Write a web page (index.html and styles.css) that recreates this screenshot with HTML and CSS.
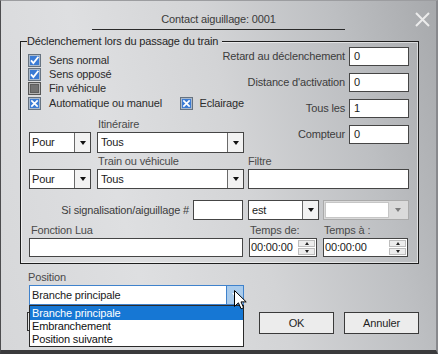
FILE: index.html
```html
<!DOCTYPE html>
<html lang="fr">
<head>
<meta charset="utf-8">
<title>Contact aiguillage</title>
<link rel="stylesheet" href="styles.css">
</head>
<body>
<div class="window">
  <div class="titlebar">
    <div class="title">Contact aiguillage: 0001</div>
    <svg class="close" width="15" height="15" viewBox="0 0 15 15"><path d="M1 1 L14 14 M14 1 L1 14" stroke="#ececec" stroke-width="2" fill="none"/></svg>
  </div>

  <div class="group">
    <div class="group-head"><span class="gh-tick"></span><span class="gh-text">Déclenchement lors du passage du train</span><span class="gh-line"></span></div>
    <div class="group-body">
      <div class="a-left">
        <div class="chk">
          <svg class="cb" width="13" height="13" viewBox="0 0 13 13"><rect x="0.5" y="0.5" width="12" height="12" fill="#a9b9cc" stroke="#66727f"/><rect x="2" y="2" width="9" height="9" fill="#3b7bd4"/><path d="M3 6.3 L5.4 9 L10.4 2.8" fill="none" stroke="#fff" stroke-width="1.8"/></svg>
          <span>Sens normal</span>
        </div>
        <div class="chk">
          <svg class="cb" width="13" height="13" viewBox="0 0 13 13"><rect x="0.5" y="0.5" width="12" height="12" fill="#a9b9cc" stroke="#66727f"/><rect x="2" y="2" width="9" height="9" fill="#3b7bd4"/><path d="M3 6.3 L5.4 9 L10.4 2.8" fill="none" stroke="#fff" stroke-width="1.8"/></svg>
          <span>Sens opposé</span>
        </div>
        <div class="chk">
          <svg class="cb" width="13" height="13" viewBox="0 0 13 13"><rect x="0.5" y="0.5" width="12" height="12" fill="#b4b4b4" stroke="#555"/><rect x="2" y="2" width="9" height="9" fill="#5e5e5e"/><rect x="3" y="3" width="7" height="7" fill="#727272"/></svg>
          <span>Fin véhicule</span>
        </div>
        <div class="chk chk-last">
          <div class="chk chk-wide">
            <svg class="cb" width="13" height="13" viewBox="0 0 13 13"><rect x="0.5" y="0.5" width="12" height="12" fill="#a9b9cc" stroke="#66727f"/><rect x="2" y="2" width="9" height="9" fill="#3b7bd4"/><path d="M3.3 3.3 L9.7 9.7 M9.7 3.3 L3.3 9.7" fill="none" stroke="#fff" stroke-width="1.7"/></svg>
            <span>Automatique ou manuel</span>
          </div>
          <div class="chk">
            <svg class="cb cb-tight" width="13" height="13" viewBox="0 0 13 13"><rect x="0.5" y="0.5" width="12" height="12" fill="#a9b9cc" stroke="#66727f"/><rect x="2" y="2" width="9" height="9" fill="#3b7bd4"/><path d="M3.3 3.3 L9.7 9.7 M9.7 3.3 L3.3 9.7" fill="none" stroke="#fff" stroke-width="1.7"/></svg>
            <span>Eclairage</span>
          </div>
        </div>

        <div class="pair pair-1">
          <div class="combo c-pour"><span class="ctext">Pour</span><span class="cbtn"><i class="tri"></i></span></div>
          <div class="pcol">
            <div class="lbl">Itinéraire</div>
            <div class="combo c-tous"><span class="ctext">Tous</span><span class="cbtn"><i class="tri"></i></span></div>
          </div>
        </div>
      </div>

      <div class="a-right">
        <div class="frow"><span class="rlbl">Retard au déclenchement</span><div class="field f-num">0</div></div>
        <div class="frow"><span class="rlbl">Distance d'activation</span><div class="field f-num">0</div></div>
        <div class="frow"><span class="rlbl">Tous les</span><div class="field f-num">1</div></div>
        <div class="frow"><span class="rlbl">Compteur</span><div class="field f-num">0</div></div>
      </div>

      <div class="b-left">
        <div class="pair pair-2">
          <div class="combo c-pour c-short"><span class="ctext">Pour</span><span class="cbtn"><i class="tri"></i></span></div>
          <div class="pcol">
            <div class="lbl">Train ou véhicule</div>
            <div class="combo c-tous c-short"><span class="ctext">Tous</span><span class="cbtn"><i class="tri"></i></span></div>
          </div>
        </div>
      </div>
      <div class="b-right">
        <div class="lbl lbl-flush">Filtre</div>
        <div class="field f-filtre"></div>
      </div>

      <div class="c-left">
        <span class="rlbl">Si signalisation/aiguillage #</span>
        <div class="field f-sig"></div>
      </div>
      <div class="c-right">
        <div class="combo c-est"><span class="ctext">est</span><span class="cbtn"><i class="tri"></i></span></div>
        <div class="combo c-dis"><span class="ctext"></span><span class="cbtn"><i class="tri"></i></span></div>
      </div>

      <div class="d-left">
        <div class="lbl lbl-lua">Fonction Lua</div>
        <div class="field f-lua"></div>
      </div>
      <div class="d-right">
        <div class="tcol t-de">
          <div class="lbl">Temps de:</div>
          <div class="time"><span class="ttext">00:00:00</span><span class="spin"><span class="sb"><i class="up"></i></span><span class="sb"><i class="dn"></i></span></span></div>
        </div>
        <div class="tcol t-a">
          <div class="lbl">Temps à :</div>
          <div class="time"><span class="ttext">00:00:00</span><span class="spin"><span class="sb"><i class="up"></i></span><span class="sb"><i class="dn"></i></span></span></div>
        </div>
      </div>
    </div>
  </div>

  <div class="bottom">
    <div class="pos-col">
      <div class="lbl">Position</div>
      <div class="combo-wrap">
        <div class="combo c-pos"><span class="ctext">Branche principale</span><span class="cbtn"><i class="tri"></i></span></div>
        <div class="dropdown">
          <div class="opt sel">Branche principale</div>
          <div class="opt">Embranchement</div>
          <div class="opt">Position suivante</div>
        </div>
      </div>
      <div class="ghost-btn"></div>
    </div>
    <div class="buttons">
      <div class="btn">OK</div>
      <div class="btn">Annuler</div>
    </div>
  </div>

  <svg class="cursor" width="13" height="20" viewBox="0 0 13 20"><path d="M0.5 0.5 L0.5 16.5 L4.4 12.8 L7.1 18.8 L9.6 17.7 L7 11.9 L12.2 11.9 Z" fill="#fff" stroke="#000" stroke-width="1" stroke-linejoin="miter"/></svg>
</div>
</body>
</html>
```

FILE: styles.css
```css
* { box-sizing: border-box; }

body {
  margin: 0;
  background: #c9cacc;
}

.window {
  position: relative;
  width: 438px;
  height: 354px;
  overflow: hidden;
  border-left: 1px solid #4d4d4f;
  border-top: 1px solid #9c9da0;
  border-right: 2px solid #88898d;
  border-bottom: 4px solid #3a3a3c;
  background: linear-gradient(75deg, #d6d7d9 0%, #dedfe1 30%, #d3d4d6 55%, #bdbfc2 80%, #a7a9ac 100%);
  font-family: "Liberation Sans", Arial, sans-serif;
  font-size: 11px;
  line-height: 13px;
  letter-spacing: -0.15px;
  color: #2c2c2c;
}

/* title bar */
.titlebar {
  display: flex;
  height: 34px;
}
.title {
  margin-left: 91px;
  margin-top: 12px;
  width: 253px;
  height: 17px;
  border-bottom: 1px solid #2a2a2a;
  text-align: center;
  color: #3a3a3a;
}
.close {
  margin-left: auto;
  margin-top: 11px;
  margin-right: 6px;
}

/* group box */
.group {
  margin-left: 19px;
  width: 399px;
}
.group-head {
  display: flex;
  height: 12px;
}
.gh-tick {
  width: 7px;
  margin-top: 6px;
  border-left: 1px solid #1e1e1e;
  border-top: 1px solid #1e1e1e;
}
.gh-text {
  white-space: nowrap;
  padding-right: 4px;
  color: #262626;
}
.gh-line {
  flex: 1;
  margin-top: 6px;
  border-top: 1px solid #1e1e1e;
  border-right: 1px solid #1e1e1e;
  box-shadow: inset -1px 1px 0 rgba(255,255,255,0.55);
}
.group-body {
  display: grid;
  grid-template-columns: 215px 161px;
  column-gap: 4px;
  padding: 0 9px 6px 8px;
  border: 1px solid #1e1e1e;
  border-top: none;
  box-shadow: inset 1px -1px 0 rgba(255,255,255,0.55), inset -1px 0 0 rgba(255,255,255,0.55);
}

/* checkboxes */
.a-left { padding-top: 7px; }
.chk {
  display: flex;
  align-items: flex-start;
  height: 14px;
  white-space: nowrap;
}
.chk-last { margin-top: 1px; }
.chk-wide { width: 158px; margin-left: -1px; }
.chk-wide .cb { margin-left: 0; }
.cb {
  flex-shrink: 0;
  margin-left: -1px;
  margin-right: 8px;
}
.cb-tight { margin-left: 0; margin-right: 6px; }

/* labels */
.lbl {
  color: #4a4a4a;
  padding-left: 1px;
  margin-bottom: 1px;
  white-space: nowrap;
}
.lbl-flush { padding-left: 0; }
.lbl-lua { padding-left: 2px; }
.rlbl {
  color: #3c3c3c;
  white-space: nowrap;
  flex-shrink: 0;
}

/* combos */
.pair {
  display: flex;
  align-items: flex-end;
  gap: 6px;
}
.pair-1 { margin-top: 7px; }
.pair-2 { margin-top: 2px; }
.combo {
  display: flex;
  height: 21px;
  background: #fff;
  border: 1px solid #454545;
}
.c-short { height: 20px; }
.c-pour { width: 62px; }
.c-tous { width: 147px; }
.ctext {
  flex: 1;
  display: flex;
  align-items: center;
  padding-left: 2px;
  white-space: nowrap;
  color: #1a1a1a;
}
.c-tous .ctext { padding-left: 3px; }
.cbtn {
  width: 16px;
  display: flex;
  align-items: center;
  justify-content: center;
  border-left: 1px solid #6a6a6a;
  background: #f2f2f2;
}
.tri {
  width: 0;
  height: 0;
  border-left: 3.5px solid transparent;
  border-right: 3.5px solid transparent;
  border-top: 4px solid #111;
}

/* right column fields */
.a-right {
  margin-left: -40px;
  display: flex;
  flex-direction: column;
  gap: 7px;
}
.frow {
  display: flex;
  justify-content: flex-end;
  align-items: center;
  gap: 4px;
}
.field {
  display: flex;
  align-items: center;
  background: #fff;
  border: 1px solid #454545;
  padding-left: 4px;
  color: #1a1a1a;
}
.f-num { width: 60px; height: 19px; }

.b-right { margin-top: 2px; }
.f-filtre { width: 161px; height: 20px; }

/* row C */
.c-left {
  margin-top: 11px;
  display: flex;
  justify-content: flex-end;
  align-items: center;
  gap: 4px;
}
.f-sig { width: 50px; height: 20px; margin-right: 1px; }
.c-right {
  margin-top: 11px;
  display: flex;
  gap: 4px;
}
.c-est { width: 71px; height: 20px; }
.c-est .ctext { padding-left: 3px; }
.c-dis {
  width: 86px;
  height: 20px;
  padding: 1px;
  border-color: #aaaaaa;
  background: #dadada;
}
.c-dis .ctext {
  background: #fff;
  border: 1px solid #c6c6c6;
}
.c-dis .cbtn {
  width: 18px;
  border-left: none;
  background: transparent;
}
.c-dis .tri { border-top-color: #7c7c7c; }

/* row D */
.d-left { margin-top: 4px; }
.f-lua { width: 214px; height: 19px; }
.d-right {
  margin-top: 4px;
  margin-left: 1px;
  display: flex;
  gap: 6px;
}
.t-de { width: 68px; }
.t-a { width: 85px; }
.time {
  display: flex;
  height: 19px;
  background: #fff;
  border: 1px solid #454545;
}
.ttext {
  flex: 1;
  display: flex;
  align-items: center;
  padding-left: 1px;
  color: #1a1a1a;
}
.spin {
  width: 18px;
  display: flex;
  flex-direction: column;
  gap: 1px;
  padding: 1px 1px 1px 0;
}
.sb {
  flex: 1;
  display: flex;
  align-items: center;
  justify-content: center;
  background: #ececec;
  border: 1px solid #bdbdbd;
}
.up, .dn {
  width: 0;
  height: 0;
  border-left: 2.5px solid transparent;
  border-right: 2.5px solid transparent;
}
.up { border-bottom: 3px solid #222; }
.dn { border-top: 3px solid #222; }

/* bottom area */
.bottom {
  display: flex;
  margin-left: 27px;
  margin-top: 7px;
}
.pos-col { width: 216px; }
.pos-col > .lbl { padding-left: 0; }
.combo-wrap {
  position: relative;
  margin-left: 1px;
  width: 215px;
}
.c-pos {
  height: 20px;
  border-color: #3f82cc;
}
.c-pos .ctext { padding-left: 2px; }
.c-pos .cbtn {
  width: 17px;
  background: #a9cbec;
  border-left: 1px solid #3f82cc;
}
.c-pos .tri { border-top-color: #fff; }
.dropdown {
  position: absolute;
  top: 100%;
  left: 0;
  width: 215px;
  height: 42px;
  background: #fff;
  border: 1px solid #2a2a2a;
  z-index: 2;
}
.opt {
  height: 13px;
  line-height: 13px;
  padding-left: 2px;
  color: #111;
  white-space: nowrap;
}
.opt.sel {
  height: 14px;
  line-height: 14px;
  background: #1677d4;
  color: #fff;
}
.ghost-btn {
  width: 60px;
  height: 19px;
  margin-top: 7px;
  margin-left: -1px;
  border: 1px solid #333;
  background: #e6e6e6;
}

.buttons {
  display: flex;
  gap: 10px;
  margin-left: 15px;
  margin-top: 41px;
  align-self: flex-start;
}
.btn {
  width: 75px;
  height: 22px;
  display: flex;
  align-items: center;
  justify-content: center;
  background: #ececec;
  border: 1px solid #3a3a3a;
  color: #1e1e1e;
}

.cursor {
  position: absolute;
  left: 233px;
  top: 289px;
  z-index: 5;
}
```
